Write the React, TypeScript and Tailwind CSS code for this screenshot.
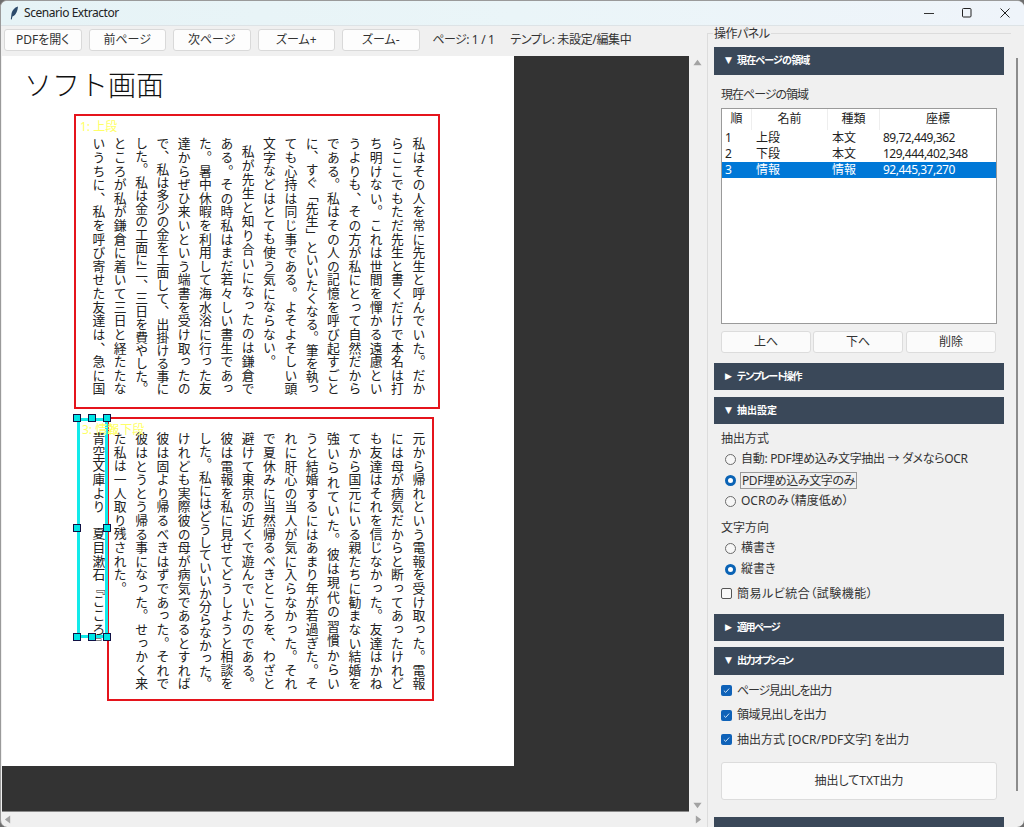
import React from "react";

const block1: [string, number][] = [
  ["私はその人を常に先生と呼んでいた。だか", 1],
  ["らここでもただ先生と書くだけで本名は打", 1],
  ["ち明けない。これは世間を憚かる遠慮とい", 1],
  ["うよりも、その方が私にとって自然だから", 1],
  ["である。私はその人の記憶を呼び起すごと", 1],
  ["に、すぐ「先生」といいたくなる。筆を執っ", 1],
  ["ても心持は同じ事である。よそよそしい頭", 1],
  ["文字などはとても使う気にならない。", 0],
  ["私が先生と知り合いになったのは鎌倉で", 2],
  ["ある。その時私はまだ若々しい書生であっ", 1],
  ["た。暑中休暇を利用して海水浴に行った友", 1],
  ["達からぜひ来いという端書を受け取ったの", 1],
  ["で、私は多少の金を工面して、出掛ける事に", 1],
  ["した。私は金の工面に二、三日を費やした。", 1],
  ["ところが私が鎌倉に着いて三日と経たたな", 1],
  ["いうちに、私を呼び寄せた友達は、急に国", 1],
];

const block2: [string, number][] = [
  ["元から帰れという電報を受け取った。電報", 1],
  ["には母が病気だからと断ってあったけれど", 1],
  ["も友達はそれを信じなかった。友達はかね", 1],
  ["てから国元にいる親たちに勧まない結婚を", 1],
  ["強いられていた。彼は現代の習慣からい", 1],
  ["うと結婚するにはあまり年が若過ぎた。そ", 1],
  ["れに肝心の当人が気に入らなかった。それ", 1],
  ["で夏休みに当然帰るべきところを、わざと", 1],
  ["避けて東京の近くで遊んでいたのである。", 1],
  ["彼は電報を私に見せてどうしようと相談を", 1],
  ["した。私にはどうしていいか分らなかった。", 1],
  ["けれども実際彼の母が病気であるとすれば", 1],
  ["彼は固より帰るべきはずであった。それで", 1],
  ["彼はとうとう帰る事になった。せっかく来", 1],
  ["た私は一人取り残された。", 0],
  ["青空文庫より　夏目漱石『こころ』", 0],
];

function Column({ text, kind }: { text: string; kind: number }) {
  if (kind === 0) return <span className="block h-[258px] tracking-[0.8px] whitespace-nowrap">{text}</span>;
  if (kind === 2)
    return <span className="block h-[258px] pt-[8px] [text-align:justify] [text-align-last:justify]">{text}</span>;
  return <span className="block h-[258px] [text-align:justify] [text-align-last:justify]">{text}</span>;
}

function VerticalText({ lines, className }: { lines: [string, number][]; className: string }) {
  return (
    <div
      className={
        "[writing-mode:vertical-rl] [font-feature-settings:normal] text-[12.8px] leading-[21.33px] text-[#222] w-[341.3px] h-[258px] " +
        className
      }
    >
      {lines.map(([t, k], i) => (
        <Column key={i} text={t} kind={k} />
      ))}
    </div>
  );
}

function TbButton({ children }: { children: React.ReactNode }) {
  return (
    <button className="w-[77.5px] h-[22px] bg-[#fdfdfd] border border-[#d9d9d9] rounded-[3px] text-[12px] text-[#333] flex items-center justify-center shrink-0">
      {children}
    </button>
  );
}

function SectionHeader({
  open,
  label,
  className = "",
  labelClass = "",
}: {
  open: boolean;
  label: string;
  className?: string;
  labelClass?: string;
}) {
  return (
    <div
      className={
        "h-[27.5px] w-[290px] bg-[#3a4859] text-white text-[10px] font-bold flex items-center pl-[11px] gap-[2px] shrink-0 " +
        className
      }
    >
      <span className="w-[10px] text-[9px] font-['DejaVu_Sans',sans-serif]">{open ? "▼" : "▶"}</span>
      <span className={labelClass}>{label}</span>
    </div>
  );
}

function Radio({ on }: { on?: boolean }) {
  return on ? (
    <span className="w-[11px] h-[11px] rounded-full border-[3px] border-[#0a63b5] bg-white shrink-0" />
  ) : (
    <span className="w-[11px] h-[11px] rounded-full border border-[#6b6b6b] bg-[#f6f6f6] shrink-0" />
  );
}

function RadioRow({ on, label, className = "" }: { on?: boolean; label: React.ReactNode; className?: string }) {
  return (
    <div className={"flex items-center h-[21px] pl-[4px] gap-[5px] text-[12px] text-[#333] " + className}>
      <Radio on={on} />
      {label}
    </div>
  );
}

function CheckRow({
  label,
  className = "",
  labelClass = "",
}: {
  label: string;
  className?: string;
  labelClass?: string;
}) {
  return (
    <div className={"flex items-center h-[24.5px] gap-[5px] text-[12px] text-[#333] " + className}>
      <span className="w-[11px] h-[11px] rounded-[2px] bg-[#0f62b8] flex items-center justify-center shrink-0">
        <svg width="7" height="7" viewBox="0 0 8 8" fill="none">
          <path d="M1 4.2 3.1 6.2 7 1.8" stroke="#cfe3f7" strokeWidth="1.1" />
        </svg>
      </span>
      <span className={labelClass}>{label}</span>
    </div>
  );
}

function PanelButton({ children, className = "" }: { children: React.ReactNode; className?: string }) {
  return (
    <button
      className={
        "h-[22px] w-[90px] bg-[#fbfbfb] border border-[#dcdcdc] rounded-[3px] text-[12px] text-[#333] flex items-center justify-center " +
        className
      }
    >
      {children}
    </button>
  );
}

function Arrow({ d, className = "" }: { d: string; className?: string }) {
  return (
    <svg width="9" height="9" viewBox="0 0 10 10" className={className}>
      <path d={d} fill="#a3a3a3" />
    </svg>
  );
}

function Handle({ className }: { className: string }) {
  return <span className={"absolute w-[8px] h-[8px] bg-[#00e5e5] border border-[#114] " + className} />;
}

const rows = [
  ["1", "上段", "本文", "89,72,449,362"],
  ["2", "下段", "本文", "129,444,402,348"],
  ["3", "情報", "情報", "92,445,37,270"],
];

export default function App() {
  return (
    <div className="w-[1024px] h-[827px] bg-[#6e6e6e] overflow-hidden">
      <div className="w-full h-full rounded-[7px] overflow-hidden bg-[#f0f0f0] flex flex-col border-l border-t border-[#9a9a9a] font-['Noto_Sans','Noto_Sans_CJK_JP',sans-serif] [font-feature-settings:'palt']">
        {/* title bar */}
        <div className="h-[25px] shrink-0 flex items-center bg-gradient-to-r from-[#e6f3f6] via-[#eaf5f8] to-[#eff4fa] border-b border-[#dde3e6]">
          <svg width="9" height="14" viewBox="0 0 9 14" className="ml-[9px]">
            <path d="M8 .5C4.5 1.5 1.8 4.6 1.4 8.4L.8 13.2l1 .2.6-2.9C5.6 9.8 7.6 5.2 8 .5Z" fill="#2c4a6b" />
          </svg>
          <span className="ml-[5px] text-[12px] tracking-[-0.45px] text-[#222]">Scenario Extractor</span>
          <div className="ml-auto flex items-center">
            <span className="w-[38px] flex justify-center">
              <svg width="10" height="10" viewBox="0 0 10 10">
                <path d="M0 5.5h10" stroke="#333" />
              </svg>
            </span>
            <span className="w-[38px] flex justify-center">
              <svg width="10" height="10" viewBox="0 0 10 10" fill="none">
                <rect x=".5" y=".5" width="8.5" height="8.5" rx="1" stroke="#222" />
              </svg>
            </span>
            <span className="w-[38px] flex justify-center mr-[0px]">
              <svg width="10" height="10" viewBox="0 0 10 10" fill="none">
                <path d="M.5.5l9 9M9.5.5l-9 9" stroke="#222" />
              </svg>
            </span>
          </div>
        </div>

        <div className="flex-1 flex min-h-0">
          {/* left */}
          <div className="w-[705px] shrink-0 flex flex-col">
            <div className="h-[30px] shrink-0 flex items-center pl-[3px] gap-[7px] pb-[2px] text-[12px] text-[#333]">
              <TbButton>PDFを開く</TbButton>
              <TbButton>前ページ</TbButton>
              <TbButton>次ページ</TbButton>
              <TbButton>ズーム+</TbButton>
              <TbButton>ズーム-</TbButton>
              <span className="ml-[6px] whitespace-nowrap tracking-[-0.6px] [word-spacing:0.5px]">ページ: 1 / 1</span>
              <span className="ml-[9px] whitespace-nowrap tracking-[-0.35px]">テンプレ: 未設定/編集中</span>
            </div>

            <div className="flex h-[756px] shrink-0">
              <div className="ml-[1px] w-[687px] bg-[#333333] border-b border-[#8a8a8a] shrink-0">
                <div className="relative w-[512px] h-[710px] bg-white flex flex-col">
                  <div className="mt-[11px] ml-[22px] h-[37px] text-[28px] leading-[37px] font-light text-[#111] [font-feature-settings:normal] whitespace-nowrap">
                    ソフト画面
                  </div>
                  <VerticalText lines={block1} className="mt-[33px] ml-[85px]" />
                  <VerticalText lines={block2} className="mt-[37px] ml-[85px]" />

                  {/* region overlays */}
                  <div className="absolute left-[72px] top-[58px] w-[366px] h-[295px] border-2 border-[#e5141c]" />
                  <div className="absolute left-[105px] top-[361px] w-[327px] h-[284px] border-2 border-[#e5141c]" />
                  <div className="absolute left-[75px] top-[362px] w-[31px] h-[220px] border-[3px] border-[#12eaea]" />
                  <Handle className="left-[71px] top-[358px]" />
                  <Handle className="left-[86px] top-[358px]" />
                  <Handle className="left-[101px] top-[358px]" />
                  <Handle className="left-[71px] top-[468px]" />
                  <Handle className="left-[101px] top-[468px]" />
                  <Handle className="left-[71px] top-[577px]" />
                  <Handle className="left-[86px] top-[577px]" />
                  <Handle className="left-[101px] top-[577px]" />
                  <span className="absolute left-[78px] top-[64px] text-[12px] leading-[14px] text-[#ffff66]">1: 上段</span>
                  <span className="absolute left-[80px] top-[367px] text-[12px] leading-[14px] text-[#ffff66]">3: 情報</span>
                  <span className="absolute left-[105px] top-[367px] text-[12px] leading-[14px] text-[#ffff66]">2: 下段</span>
                </div>
              </div>
              <div className="flex-1 flex flex-col items-center justify-between py-[2px]">
                <Arrow d="M5 2 9.5 8H.5Z" />
                <Arrow d="M5 8 .5 2h9Z" />
              </div>
            </div>

            <div className="h-[15px] shrink-0 flex items-center justify-between pl-[2px] pr-[3px]">
              <Arrow d="M2 5 8 .5v9Z" />
              <Arrow d="M8 5 2 .5v9Z" />
            </div>
          </div>

          {/* right panel */}
          <div className="relative flex-1 min-w-0 pt-[7px] pl-[1px]">
            <span className="absolute left-[7px] top-[0px] text-[12px] leading-[15px] px-[1px] tracking-[-0.5px] bg-[#f0f0f0] text-[#333] z-10">
              操作パネル
            </span>
            <div className="relative h-[800px] w-[304px] border-l border-t border-[#dcdcdc] pl-[6px] pt-[13px]">
              <SectionHeader open label="現在ページの領域" labelClass="tracking-[-0.8px]" />
              <div className="pl-[7px] w-[283px] flex flex-col">
                <div className="mt-[12px] h-[16px] leading-[16px] text-[12px] tracking-[-1px] text-[#333]">現在ページの領域</div>
                <div className="mt-[5px] h-[216px] border border-[#9a9a9a] bg-white text-[12px] text-[#222]">
                  <div className="h-[21px] grid grid-cols-[30px_76px_52px_1fr] text-center leading-[20px]">
                    <span className="border-r border-[#eeeeee]">順</span>
                    <span className="border-r border-[#eeeeee]">名前</span>
                    <span className="border-r border-[#eeeeee]">種類</span>
                    <span>座標</span>
                  </div>
                  {rows.map((r) => (
                    <div
                      key={r[0]}
                      className={
                        "h-[16px] leading-[16px] grid grid-cols-[30px_76px_52px_1fr] " +
                        (r[0] === "3" ? "bg-[#0078d7] text-white" : "")
                      }
                    >
                      <span className="pl-[3px]">{r[0]}</span>
                      <span className="pl-[4px]">{r[1]}</span>
                      <span className="pl-[4px]">{r[2]}</span>
                      <span className="pl-[3px] tracking-[-0.5px]">{r[3]}</span>
                    </div>
                  ))}
                </div>
                <div className="mt-[7px] flex gap-[2px]">
                  <PanelButton>上へ</PanelButton>
                  <PanelButton>下へ</PanelButton>
                  <PanelButton className="ml-[1px]">削除</PanelButton>
                </div>
              </div>

              <SectionHeader open={false} label="テンプレート操作" className="mt-[10px]" labelClass="tracking-[-1.3px]" />
              <SectionHeader open label="抽出設定" className="mt-[6.5px]" />
              <div className="pl-[7px] w-[283px] flex flex-col">
                <div className="mt-[6.5px] h-[16px] leading-[16px] text-[12px] text-[#333]">抽出方式</div>
                <RadioRow className="mt-[2px]" label={<span className="tracking-[-0.3px]">自動: PDF埋め込み文字抽出 → ダメならOCR</span>} />
                <RadioRow on label={<span className="border border-[#9a9a9a] h-[17px] leading-[15px] px-[1px] -ml-[1px] tracking-[-0.4px]">PDF埋め込み文字のみ</span>} />
                <RadioRow label="OCRのみ（精度低め）" />
                <div className="mt-[8px] h-[16px] leading-[16px] text-[12px] text-[#333]">文字方向</div>
                <RadioRow className="mt-[2px]" label="横書き" />
                <RadioRow on label="縦書き" />
                <div className="mt-[2px] h-[24px] flex items-center gap-[5px] text-[12px] text-[#333]">
                  <span className="w-[11px] h-[11px] border border-[#555] rounded-[2px] bg-[#f8f8f8] shrink-0" />
                  <span className="tracking-[0.5px]">簡易ルビ統合（試験機能）</span>
                </div>
              </div>

              <SectionHeader open={false} label="適用ページ" className="mt-[8px]" labelClass="tracking-[-1.4px]" />
              <SectionHeader open label="出力オプション" className="mt-[6px]" labelClass="tracking-[-1.4px]" />
              <div className="pl-[7px] w-[283px] flex flex-col">
                <CheckRow className="mt-[4px]" label="ページ見出しを出力" labelClass="tracking-[-1.2px]" />
                <CheckRow label="領域見出しを出力" labelClass="tracking-[-0.5px]" />
                <CheckRow label="抽出方式 [OCR/PDF文字] を出力" />
                <PanelButton className="mt-[10px] !w-[276px] !h-[38px]">抽出してTXT出力</PanelButton>
              </div>
              <div className="mt-[17px] h-[28px] w-[290px] bg-[#3a4859]" />

              <div className="absolute left-[308px] top-[24px] h-[733px] w-[2px] bg-[#8c8c8c]" />
            </div>
          </div>
        </div>
      </div>
    </div>
  );
}
